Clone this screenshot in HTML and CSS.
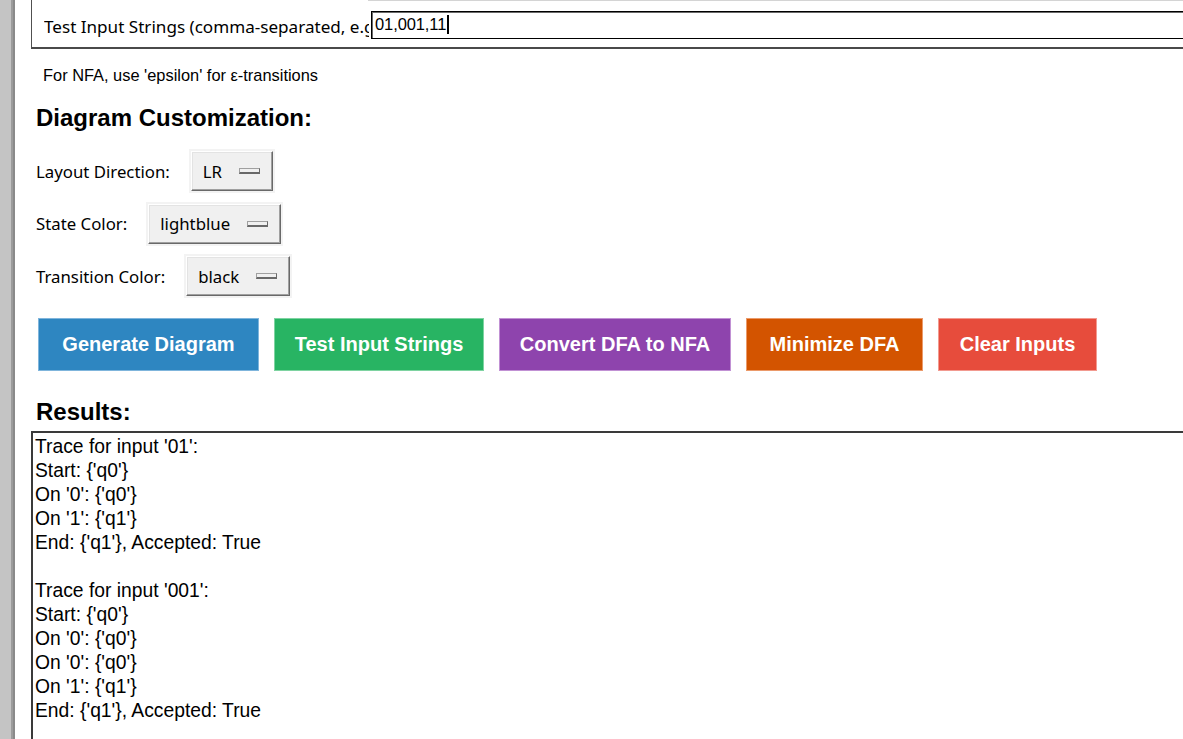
FILE: index.html
```html
<!DOCTYPE html>
<html>
<head>
<meta charset="utf-8">
<link rel="stylesheet" href="styles.css">
</head>
<body>
<div class="app">
  <div class="strip"></div>
  <div class="main">
    <div class="frame">
      <div class="prev-line"></div>
      <div class="frame-row">
        <div class="frame-label">Test Input Strings (comma-separated, e.g., 01,001,11):</div>
        <div class="entry"><span class="entry-text">01,001,11</span><span class="caret"></span></div>
      </div>
    </div>

    <div class="note">For NFA, use 'epsilon' for ε-transitions</div>

    <h2 class="heading">Diagram Customization:</h2>

    <div class="opt-row opt-first">
      <span class="opt-label">Layout Direction:</span>
      <div class="optmenu"><span>LR</span><span class="indicator"></span></div>
    </div>
    <div class="opt-row">
      <span class="opt-label">State Color:</span>
      <div class="optmenu"><span>lightblue</span><span class="indicator"></span></div>
    </div>
    <div class="opt-row">
      <span class="opt-label">Transition Color:</span>
      <div class="optmenu"><span>black</span><span class="indicator"></span></div>
    </div>

    <div class="buttons">
      <button class="btn btn-blue">Generate Diagram</button>
      <button class="btn btn-green">Test Input Strings</button>
      <button class="btn btn-purple">Convert DFA to NFA</button>
      <button class="btn btn-orange">Minimize DFA</button>
      <button class="btn btn-red">Clear Inputs</button>
    </div>

    <h2 class="heading results-heading">Results:</h2>

    <div class="results">
      <div>Trace for input '01':</div>
      <div>Start: {'q0'}</div>
      <div>On '0': {'q0'}</div>
      <div>On '1': {'q1'}</div>
      <div>End: {'q1'}, Accepted: True</div>
      <div class="blank"></div>
      <div>Trace for input '001':</div>
      <div>Start: {'q0'}</div>
      <div>On '0': {'q0'}</div>
      <div>On '0': {'q0'}</div>
      <div>On '1': {'q1'}</div>
      <div>End: {'q1'}, Accepted: True</div>
    </div>
  </div>
</div>
</body>
</html>
```
FILE: styles.css
```css
html, body {
  margin: 0;
  padding: 0;
  background: #ffffff;
  overflow: hidden;
}

.app {
  display: flex;
  width: 1183px;
  height: 739px;
  overflow: hidden;
}

.strip {
  flex: 0 0 11px;
  background: #c4c4c4;
  border-right: 2px solid #9c9c9c;
  box-shadow: 2px 0 0 #8a8a8a;
  margin-right: 3px;
}

.main {
  flex: 1;
  min-width: 0;
  overflow: hidden;
  font-family: "Liberation Sans", Arial, sans-serif;
  color: #000;
}

/* top frame */
.frame {
  margin-left: 15px;
  margin-right: -20px;
  border-left: 1px solid #505050;
  border-bottom: 2px solid #4a4a4a;
}

.prev-line {
  height: 1px;
  margin-left: 336px;
  background: #d4d4d4;
}

.frame-row {
  display: flex;
  align-items: center;
  height: 46px;
  padding-left: 12px;
}

.frame-label {
  width: 325px;
  flex: 0 0 325px;
  overflow: hidden;
  white-space: nowrap;
  font-family: "Noto Sans", "Open Sans", sans-serif;
  font-size: 17.1px;
  color: #000;
  margin: 4px 2px 0 0;
}

.entry {
  flex: 1;
  height: 26px;
  border: 1px solid #000;
  box-shadow: inset 1px 1px 0 #6a6a6a;
  display: flex;
  align-items: center;
  padding-left: 3px;
  margin-top: 1px;
}

.entry-text {
  font-family: "Liberation Sans", Arial, sans-serif;
  font-size: 16.5px;
  letter-spacing: -0.1px;
}

.caret {
  display: inline-block;
  width: 2px;
  height: 19px;
  background: #000;
  margin-left: 1px;
}

.note {
  margin: 16px 0 0 27px;
  font-size: 16.4px;
  line-height: 20px;
}

.heading {
  margin: 19px 0 0 20px;
  font-size: 24px;
  font-weight: bold;
  line-height: 28px;
}

/* option rows */
.opt-row {
  display: flex;
  align-items: center;
  margin: 12.5px 0 0 20px;
  height: 40px;
  gap: 21px;
}

.opt-row.opt-first {
  margin-top: 19px;
}

.opt-label {
  font-family: "Noto Sans", "Open Sans", sans-serif;
  font-size: 16.8px;
}

.optmenu {
  display: flex;
  align-items: center;
  height: 38px;
  padding: 0 12px 0 11px;
  background: #f0f0f0;
  border-top: 1px solid #ffffff;
  border-left: 1px solid #ffffff;
  border-right: 1px solid #696969;
  border-bottom: 1px solid #696969;
  box-shadow: inset -1px -1px 0 #a0a0a0, inset 1px 1px 0 #e3e3e3, 0 0 0 2px #f3f3f3;
  font-family: "Noto Sans", "Open Sans", sans-serif;
  font-size: 16.8px;
  gap: 17px;
}

.indicator {
  display: inline-block;
  width: 19px;
  height: 3px;
  background: #f0f0f0;
  border-top: 1px solid #a0a0a0;
  border-left: 1px solid #a0a0a0;
  border-right: 1px solid #696969;
  border-bottom: 2px solid #696969;
}

/* action buttons */
.buttons {
  display: flex;
  gap: 15px;
  margin: 22px 0 0 22px;
}

.btn {
  box-sizing: border-box;
  height: 53px;
  padding: 0;
  border: 1px solid;
  white-space: nowrap;
  font-family: "Liberation Sans", Arial, sans-serif;
  font-size: 20px;
  font-weight: bold;
  color: #ffffff;
  cursor: pointer;
}

.btn-blue   { background: #2e86c1; border-color: #7fb5dc; width: 221px; }
.btn-green  { background: #28b463; border-color: #7ed3a1; width: 210px; }
.btn-purple { background: #8e44ad; border-color: #c191d4; width: 232px; }
.btn-orange { background: #d35400; border-color: #eb9a6a; width: 177px; }
.btn-red    { background: #e74c3c; border-color: #f29a90; width: 159px; }

.results-heading {
  margin-top: 27px;
}

.results {
  margin: 5px -20px 0 15px;
  border-top: 2px solid #3a3a3a;
  border-left: 2px solid #3a3a3a;
  padding: 2px 0 0 2px;
  height: 400px;
  font-family: "Liberation Sans", Arial, sans-serif;
  font-size: 19.3px;
  line-height: 24px;
}

.results .blank {
  height: 24px;
}
```
